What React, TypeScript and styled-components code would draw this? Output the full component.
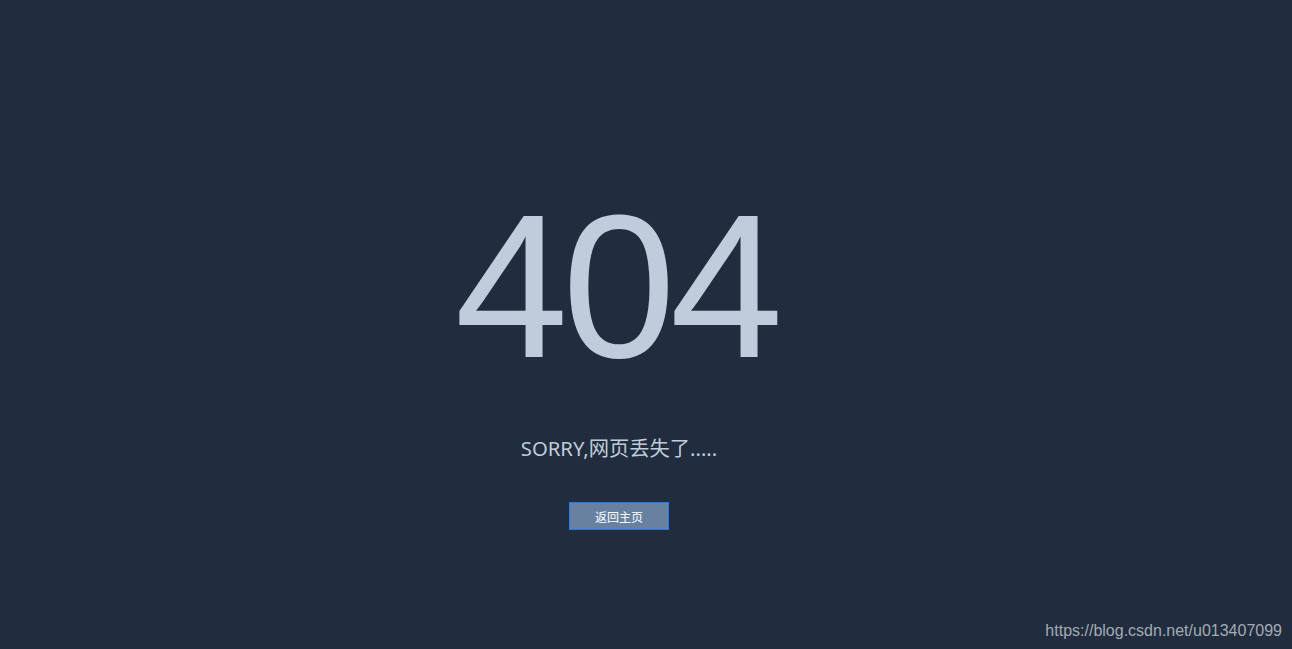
import React from "react";
import styled, { createGlobalStyle } from "styled-components";

const Global = createGlobalStyle`
  html, body { margin: 0; padding: 0; height: 100%; background: #212d3e; }
  #root { height: 100%; }
`;

const Page = styled.div`
  position: relative;
  width: 1292px;
  height: 649px;
  background: #212d3e;
  overflow: hidden;
`;

const Content = styled.div`
  width: 1238px;
  display: flex;
  flex-direction: column;
  align-items: center;
  padding-top: 175px;
`;

const Code = styled.div`
  font-family: "Liberation Sans", Arial, sans-serif;
  font-size: 204px;
  line-height: 222px;
  color: #bfccdb;
  letter-spacing: -6px;
  padding-right: 6px;
`;

const Message = styled.div`
  margin-top: 38px;
  font-family: "Noto Sans", "Noto Sans CJK SC", sans-serif;
  font-size: 20.3px;
  line-height: 26px;
  color: #bfccdb;
`;

const HomeButton = styled.button`
  margin-top: 41px;
  width: 100px;
  height: 28px;
  box-sizing: border-box;
  background: #6881a1;
  border: 1px solid #1f7cf5;
  color: #ffffff;
  font-family: "Noto Sans CJK SC", sans-serif;
  font-size: 12px;
  padding: 0;
  cursor: pointer;
`;

const Watermark = styled.div`
  position: absolute;
  right: 10px;
  bottom: 9px;
  font-family: "Liberation Sans", Arial, sans-serif;
  font-size: 16px;
  color: #a3abb5;
`;

export default function App() {
  return (
    <>
      <Global />
      <Page>
        <Content>
          <Code>404</Code>
          <Message>SORRY,网页丢失了.....</Message>
          <HomeButton>返回主页</HomeButton>
        </Content>
        <Watermark>https://blog.csdn.net/u013407099</Watermark>
      </Page>
    </>
  );
}
